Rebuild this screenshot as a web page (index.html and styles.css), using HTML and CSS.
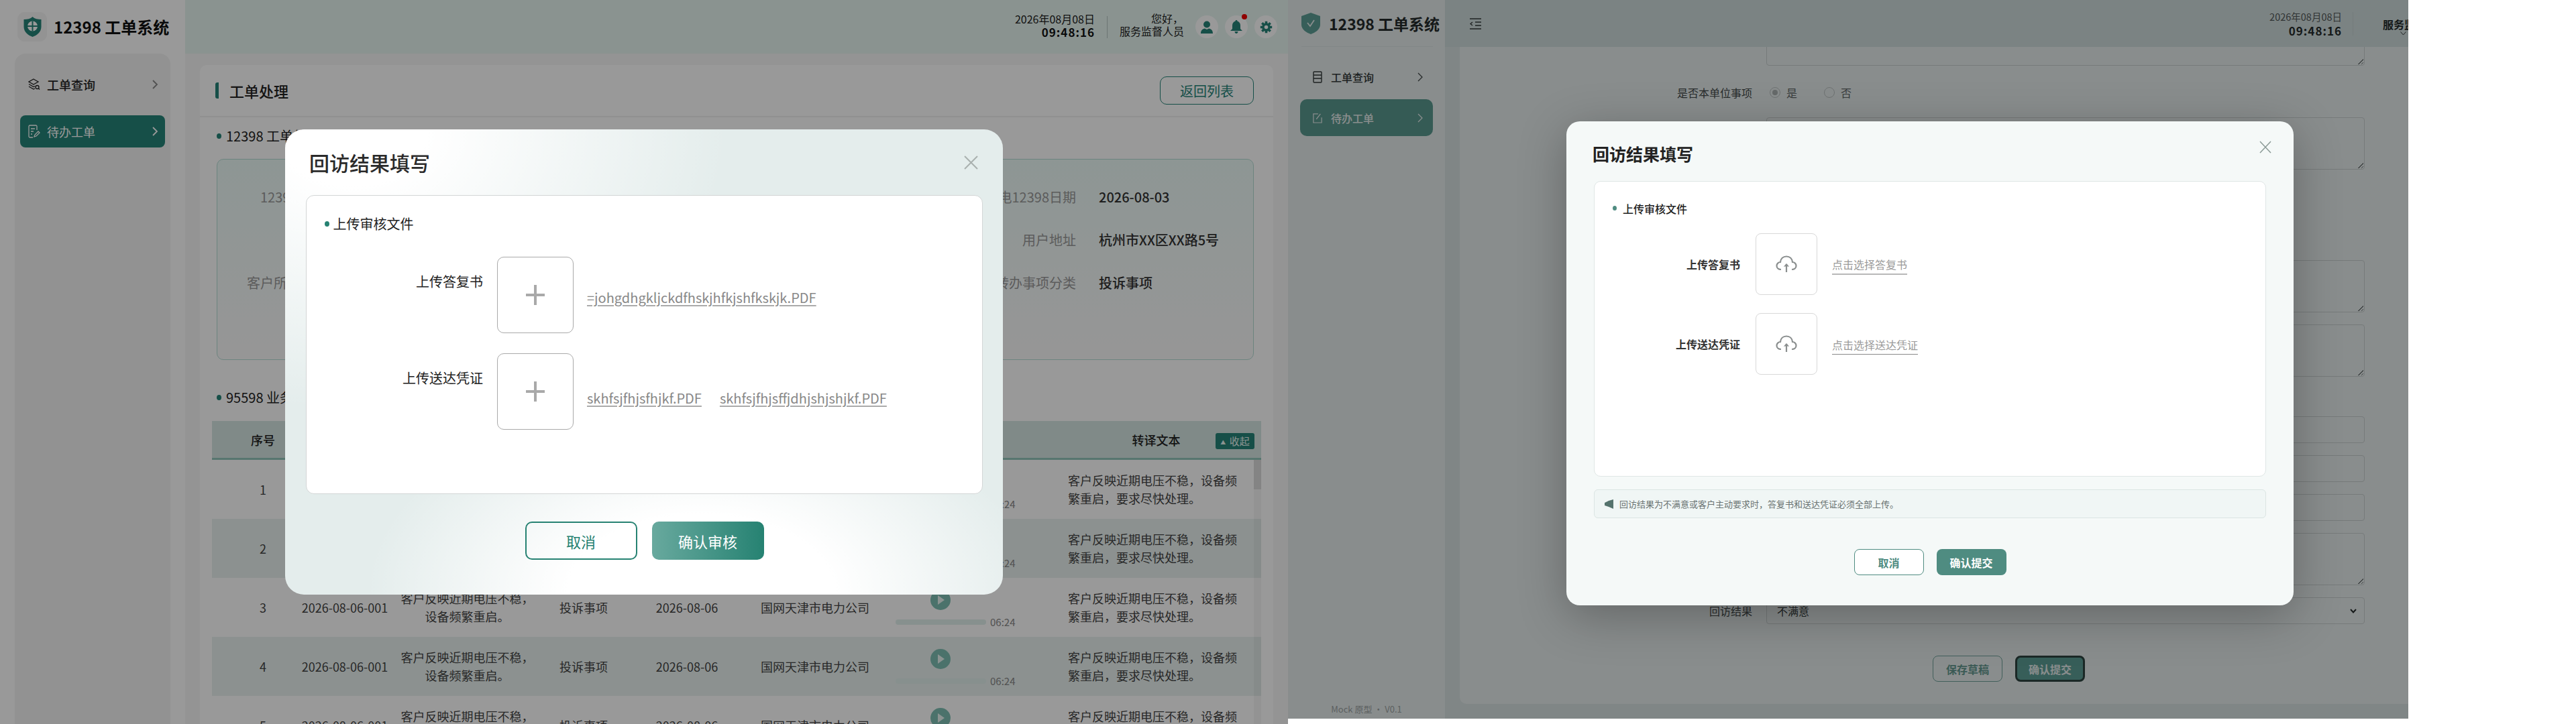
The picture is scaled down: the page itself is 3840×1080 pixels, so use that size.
FILE: index.html
```html
<!DOCTYPE html>
<html lang="zh-CN">
<head>
<meta charset="UTF-8">
<meta name="viewport" content="width=device-width, initial-scale=1.0">
<title>12398 工单系统</title>
<link rel="stylesheet" href="styles.css">
</head>
<body>

<!-- 左：审核文件上传弹窗 -->
<div class="app app-audit">
  <aside class="side">
    <div class="brand">
      <span class="brand-box">
        <svg width="27" height="30" viewBox="0 0 26 30"><path d="M13 0C16 3 21 4 26 4V15C26 23 19 28 13 30C7 28 0 23 0 15V4C5 4 10 3 13 0Z" fill="#268478"/><circle cx="13" cy="14" r="7.5" fill="#fff"/><path d="M13 6.5V21.500M5.500 14H20.500" stroke="#268478" stroke-width="2"/></svg>
      </span>
      <span class="brand-name">12398 工单系统</span>
    </div>
    <nav class="menu">
      <a class="menu-item">
        <svg class="menu-icon" width="18" height="18" viewBox="0 0 18 18" fill="none" stroke="#222" stroke-width="1.300"><path d="M8 1 15 5 8 9 1 5Z"/><path d="M1 8.500 8 12.500 10 11.500M1 12 8 16 10 15"/><circle cx="13.500" cy="13" r="2.500"/><path d="M15.500 15 17 16.500"/></svg>
        <span class="menu-text">工单查询</span>
        <svg class="menu-arrow" width="10" height="16" viewBox="0 0 10 16" fill="none" stroke="#888" stroke-width="1.800"><path d="M2 2 8 8 2 14"/></svg>
      </a>
      <a class="menu-item active">
        <svg class="menu-icon" width="18" height="20" viewBox="0 0 18 20" fill="none" stroke="#fff" stroke-width="1.300"><path d="M13 8V2.500C13 1.700 12.300 1 11.500 1H2.500C1.700 1 1 1.700 1 2.500V17.500C1 18.300 1.700 19 2.500 19H7"/><path d="M4 6H10M4 10H8M4 14H6"/><path d="M9 18 10 15 15 10 17 12 12 17Z"/></svg>
        <span class="menu-text">待办工单</span>
        <svg class="menu-arrow" width="10" height="16" viewBox="0 0 10 16" fill="none" stroke="#fff" stroke-width="1.800"><path d="M2 2 8 8 2 14"/></svg>
      </a>
    </nav>
  </aside>

  <div class="main">
    <header class="top">
      <div class="clock">
        <span class="clock-date">2026年08月08日</span>
        <strong class="clock-time">09:48:16</strong>
      </div>
      <div class="top-line"></div>
      <div class="hello">您好，<br>服务监督人员</div>
      <span class="round-btn">
        <svg width="18" height="19" viewBox="0 0 18 19" fill="#268478"><circle cx="9" cy="5.500" r="5"/><path d="M0 19C0 14 3 12 6 11.500L9 13 12 11.500C15 12 18 14 18 19Z"/></svg>
      </span>
      <span class="round-btn">
        <svg width="18" height="20" viewBox="0 0 18 20" fill="#268478"><path d="M9 0C10 0 10.500.7 10.500 1.500 13.500 2.300 15 5 15 8V13L18 16H0L3 13V8C3 5 4.500 2.300 7.500 1.500 7.500.7 8 0 9 0Z"/><path d="M6.500 17H11.500C11.500 18.500 10.500 20 9 20S6.500 18.500 6.500 17Z"/></svg>
        <i class="red-dot"></i>
      </span>
      <span class="round-btn">
        <svg width="19" height="19" viewBox="0 0 24 24"><path d="M12 1V23M1 12H23M4.200 4.200 19.800 19.800M19.800 4.200 4.200 19.800" stroke="#268478" stroke-width="4.500"/><circle cx="12" cy="12" r="8" fill="#268478"/><circle cx="12" cy="12" r="3.500" fill="#fff"/></svg>
      </span>
    </header>

    <section class="card">
      <div class="card-head">
        <h2 class="card-title">工单处理</h2>
        <button class="btn-back">返回列表</button>
      </div>

      <h3 class="sec-title">12398 工单信息</h3>
      <div class="info-box">
        <span class="info-label">12398 编号</span><span class="info-val">TD20260803001</span>
        <span class="info-label">用户姓名</span><span class="info-val">张先生</span>
        <span class="info-label">来电12398日期</span><span class="info-val">2026-08-03</span>
        <span class="info-label">户号</span><span class="info-val">3300128890</span>
        <span class="info-label">联系电话</span><span class="info-val">138****5678</span>
        <span class="info-label">用户地址</span><span class="info-val">杭州市XX区XX路5号</span>
        <span class="info-label">客户所属地区</span><span class="info-val">杭州市</span>
        <span class="info-label">承办单位</span><span class="info-val">国网杭州供电公司</span>
        <span class="info-label">转办事项分类</span><span class="info-val">投诉事项</span>
      </div>

      <h3 class="sec-title sec-second">95598 业务记录</h3>
      <div class="grid-table">
        <div class="g-row g-head">
          <span>序号</span><span>工单编号</span><span>诉求内容</span><span>业务类型</span><span>受理日期</span><span>承办单位</span><span>录音</span><span>转译文本</span>
          <button class="btn-fold"><small>▲</small> 收起</button>
        </div>
        <div class="g-row">
          <span>1</span><span>2026-08-06-001</span><span class="g-desc">客户反映近期电压不稳，设备频繁重启。</span><span>投诉事项</span><span>2026-08-06</span><span>国网天津市电力公司</span>
          <div class="audio"><i class="play"></i><div class="audio-line"><i class="audio-bar"></i><em>06:24</em></div></div>
          <span class="g-text">客户反映近期电压不稳，设备频繁重启，要求尽快处理。</span>
        </div>
        <div class="g-row">
          <span>2</span><span>2026-08-06-001</span><span class="g-desc">客户反映近期电压不稳，设备频繁重启。</span><span>投诉事项</span><span>2026-08-06</span><span>国网天津市电力公司</span>
          <div class="audio"><i class="play"></i><div class="audio-line"><i class="audio-bar"></i><em>06:24</em></div></div>
          <span class="g-text">客户反映近期电压不稳，设备频繁重启，要求尽快处理。</span>
        </div>
        <div class="g-row">
          <span>3</span><span>2026-08-06-001</span><span class="g-desc">客户反映近期电压不稳，设备频繁重启。</span><span>投诉事项</span><span>2026-08-06</span><span>国网天津市电力公司</span>
          <div class="audio"><i class="play"></i><div class="audio-line"><i class="audio-bar"></i><em>06:24</em></div></div>
          <span class="g-text">客户反映近期电压不稳，设备频繁重启，要求尽快处理。</span>
        </div>
        <div class="g-row">
          <span>4</span><span>2026-08-06-001</span><span class="g-desc">客户反映近期电压不稳，设备频繁重启。</span><span>投诉事项</span><span>2026-08-06</span><span>国网天津市电力公司</span>
          <div class="audio"><i class="play"></i><div class="audio-line"><i class="audio-bar"></i><em>06:24</em></div></div>
          <span class="g-text">客户反映近期电压不稳，设备频繁重启，要求尽快处理。</span>
        </div>
        <div class="g-row">
          <span>5</span><span>2026-08-06-001</span><span class="g-desc">客户反映近期电压不稳，设备频繁重启。</span><span>投诉事项</span><span>2026-08-06</span><span>国网天津市电力公司</span>
          <div class="audio"><i class="play"></i><div class="audio-line"><i class="audio-bar"></i><em>06:24</em></div></div>
          <span class="g-text">客户反映近期电压不稳，设备频繁重启，要求尽快处理。</span>
        </div>
        <div class="scroll-track"><i class="scroll-thumb"></i></div>
      </div>
    </section>
  </div>

  <div class="mask"></div>
  <div class="modal">
    <div class="modal-head">
      <h2 class="modal-title">回访结果填写</h2>
      <svg class="modal-close" width="21" height="21" viewBox="0 0 21 21" stroke="#a9b0ae" stroke-width="2"><path d="M1 1 20 20M20 1 1 20"/></svg>
    </div>
    <div class="modal-card">
      <h3 class="sec-title">上传审核文件</h3>
      <div class="up-row">
        <label class="up-label">上传答复书</label>
        <div class="up-box"><span class="up-plus"></span></div>
        <a class="up-file">=johgdhgkljckdfhskjhfkjshfkskjk.PDF</a>
      </div>
      <div class="up-row">
        <label class="up-label">上传送达凭证</label>
        <div class="up-box"><span class="up-plus"></span></div>
        <a class="up-file low">skhfsjfhjsfhjkf.PDF</a>
        <a class="up-file low">skhfsjfhjsffjdhjshjshjkf.PDF</a>
      </div>
    </div>
    <div class="modal-foot">
      <button class="btn-line">取消</button>
      <button class="btn-solid">确认审核</button>
    </div>
  </div>
</div>

<!-- 右：回访结果弹窗 -->
<div class="app2">
  <div class="app2-inner">
    <aside class="side2">
      <div class="brand2">
        <svg width="28" height="32" viewBox="0 0 28 32"><path d="M14 0 28 5V18C28 25 20 30 14 32 8 30 0 25 0 18V5Z" fill="#62a69b"/><path d="M9 15 13 20 19 11" fill="none" stroke="#fff" stroke-width="1.800"/></svg>
        <span class="brand2-name">12398 工单系统</span>
      </div>
      <nav class="menu2">
        <a class="menu2-item">
          <svg width="14" height="18" viewBox="0 0 14 18" fill="none" stroke="#333" stroke-width="1.400"><rect x="1" y="1" width="12" height="16" rx="1"/><path d="M1 6H13M1 11H13"/></svg>
          <span class="menu2-text">工单查询</span>
          <svg class="menu2-arrow" width="9" height="14" viewBox="0 0 9 14" fill="none" stroke="#444" stroke-width="1.300"><path d="M1 1 7 7 1 13"/></svg>
        </a>
        <a class="menu2-item active">
          <svg width="14" height="16" viewBox="0 0 16 18" fill="none" stroke="#fff" stroke-width="1.400"><path d="M9 2H1V17H15V8"/><path d="M6 11 13 2"/></svg>
          <span class="menu2-text">待办工单</span>
          <svg class="menu2-arrow" width="9" height="14" viewBox="0 0 9 14" fill="none" stroke="#fff" stroke-width="1.300"><path d="M1 1 7 7 1 13"/></svg>
        </a>
      </nav>
      <div class="side2-foot">Mock 原型 · V0.1</div>
    </aside>

    <div class="main2">
      <header class="top2">
        <svg class="fold-icon" width="17" height="17" viewBox="0 0 17 17" fill="none" stroke="#333" stroke-width="1.400"><path d="M0 1H17M8 6H17M8 11H17M0 16H17M4 6 1 8.500 4 11"/></svg>
        <div class="clock2">
          <span class="clock2-date">2026年08月08日</span>
          <strong class="clock2-time">09:48:16</strong>
        </div>
        <div class="top2-line"></div>
        <div class="user2">
          <strong>服务监督人员</strong>
          <svg width="9" height="6" viewBox="0 0 9 6" fill="none" stroke="#333"><path d="M.5.500 4.500 5 8.500.500"/></svg>
        </div>
      </header>

      <section class="form-card">
        <div class="f-row"><label>回访说明</label><div class="f-area"><i class="grip"></i></div></div>
        <div class="f-row f-radio">
          <label>是否本单位事项</label>
          <span class="radio on"></span><span class="radio-text">是</span>
          <span class="radio"></span><span class="radio-text">否</span>
        </div>
        <div class="f-row"><label>处理结果</label><div class="f-area"><i class="grip"></i></div></div>
        <div class="f-row f-gap-l"><label>整改措施</label><div class="f-area"><i class="grip"></i></div></div>
        <div class="f-row"><label>回复内容</label><div class="f-area"><i class="grip"></i></div></div>
        <div class="f-row f-gap-m"><label>回访人</label><div class="f-input"></div></div>
        <div class="f-row"><label>回访电话</label><div class="f-input"></div></div>
        <div class="f-row"><label>回访时间</label><div class="f-input"></div></div>
        <div class="f-row"><label>回访记录</label><div class="f-area"><i class="grip"></i></div></div>
        <div class="f-row">
          <label>回访结果</label>
          <div class="f-input f-select">不满意
            <svg width="10" height="7" viewBox="0 0 10 7" fill="none" stroke="#222" stroke-width="2"><path d="M1 1 5 5.500 9 1"/></svg>
          </div>
        </div>
        <div class="form-btns">
          <button class="btn2-line">保存草稿</button>
          <button class="btn2-solid dark">确认提交</button>
        </div>
      </section>
    </div>

    <div class="mask2"></div>
    <div class="modal2">
      <div class="modal2-head">
        <h2 class="modal2-title">回访结果填写</h2>
        <svg class="modal2-close" width="18" height="19" viewBox="0 0 18 19" stroke="#8a9a96" stroke-width="1.500"><path d="M1 1 17 18M17 1 1 18"/></svg>
      </div>
      <div class="modal2-card">
        <h3 class="sec2-title">上传审核文件</h3>
        <div class="up2-row">
          <label class="up2-label">上传答复书</label>
          <div class="up2-box">
            <svg width="32" height="26" viewBox="0 0 32 26" fill="none" stroke="#8b8f8f" stroke-width="2.200"><path d="M8 21C4 21 1.500 18.500 1.500 15.500 1.500 12.500 4 10 7 10 7.500 5 11 1.500 16 1.500S24.500 5 25 10C28 10 30.500 12.500 30.500 15.500 30.500 18.500 28 21 24 21"/><path d="M16 25V13"/><path d="M12.500 16.500 16 12.500 19.500 16.500" fill="#8b8f8f" stroke-width="1"/></svg>
          </div>
          <a class="up2-link">点击选择答复书</a>
        </div>
        <div class="up2-row">
          <label class="up2-label">上传送达凭证</label>
          <div class="up2-box">
            <svg width="32" height="26" viewBox="0 0 32 26" fill="none" stroke="#8b8f8f" stroke-width="2.200"><path d="M8 21C4 21 1.500 18.500 1.500 15.500 1.500 12.500 4 10 7 10 7.500 5 11 1.500 16 1.500S24.500 5 25 10C28 10 30.500 12.500 30.500 15.500 30.500 18.500 28 21 24 21"/><path d="M16 25V13"/><path d="M12.500 16.500 16 12.500 19.500 16.500" fill="#8b8f8f" stroke-width="1"/></svg>
          </div>
          <a class="up2-link thin">点击选择送达凭证</a>
        </div>
      </div>
      <div class="notice">
        <svg width="13" height="14" viewBox="0 0 13 14" fill="#55736d"><path d="M0 5 6 2 13 0V14L6 11 0 9Z"/></svg>
        <span>回访结果为不满意或客户主动要求时，答复书和送达凭证必须全部上传。</span>
      </div>
      <div class="modal2-foot">
        <button class="btn2-line light">取消</button>
        <button class="btn2-solid">确认提交</button>
      </div>
    </div>
  </div>
</div>

</body>
</html>
```

FILE: styles.css
```css
* {
  box-sizing: border-box;
}
body {
  margin: 0;
  display: flex;
  align-items: flex-start;
  width: 3840px;
  height: 1080px;
  overflow: hidden;
  background: #fff;
  color: #222;
  font-family: "Noto Sans CJK SC", "Noto Sans", sans-serif;
}
h2, h3 {
  margin: 0;
}
button {
  font-family: inherit;
  cursor: pointer;
}

/* 左侧页面 */
.app {
  position: relative;
  display: flex;
  flex: none;
  width: 1920px;
  height: 1080px;
  overflow: hidden;
  background: #f7f7f7;
}
.side {
  flex: none;
  width: 276px;
  display: flex;
  flex-direction: column;
  background: #fff;
}
.brand {
  height: 80px;
  padding: 18px 0 0 26px;
  display: flex;
  align-items: flex-start;
  gap: 10px;
}
.brand-box {
  width: 44px;
  height: 44px;
  border-radius: 11px;
  background: #f6f6f6;
  display: flex;
  align-items: center;
  justify-content: center;
}
.brand-name {
  font-size: 24px;
  font-weight: 700;
  line-height: 44px;
  color: #111;
}
.menu {
  flex: 1;
  margin: 0 22px;
  padding: 22px 8px;
  background: #f3f3f3;
  border-radius: 16px 16px 0 0;
}
.menu-item {
  height: 48px;
  padding: 0 10px 0 12px;
  display: flex;
  align-items: center;
  border-radius: 8px;
  margin-bottom: 22px;
}
.menu-item.active {
  background: #268478;
  color: #fff;
}
.menu-icon {
  flex: none;
}
.menu-text {
  margin-left: 10px;
  flex: 1;
  font-size: 18px;
  font-weight: 500;
}
.menu-item.active .menu-text {
  font-weight: 400;
}

.main {
  flex: 1;
  min-width: 0;
}
.top {
  height: 80px;
  padding: 0 16px 0 0;
  display: flex;
  align-items: center;
  justify-content: flex-end;
  background: #e6f5f1;
}
.clock {
  display: flex;
  flex-direction: column;
  align-items: flex-end;
  margin-top: -4px;
  line-height: 20px;
}
.clock-date {
  font-size: 16px;
  color: #222;
}
.clock-time {
  font-size: 17px;
  letter-spacing: 1px;
  font-weight: 700;
  color: #111;
}
.top-line {
  width: 1px;
  height: 33px;
  margin: 0 18px;
  background: #b5c4c1;
}
.hello {
  width: 95px;
  margin-top: -6px;
  margin-right: 18px;
  text-align: right;
  font-size: 16px;
  line-height: 19px;
  white-space: nowrap;
}
.round-btn {
  position: relative;
  width: 34px;
  height: 34px;
  margin-left: 10px;
  border-radius: 50%;
  background: #fff;
  display: flex;
  align-items: center;
  justify-content: center;
}
.hello + .round-btn {
  margin-left: 0;
}
.red-dot {
  position: absolute;
  top: -2px;
  right: 1px;
  width: 8px;
  height: 8px;
  border-radius: 50%;
  background: #f00000;
}

.card {
  height: 983px;
  margin: 17px 22px 0;
  border-radius: 10px 10px 0 0;
  background: #fff;
  overflow: hidden;
}
.card-head {
  height: 78px;
  padding: 0 29px 0 23px;
  display: flex;
  align-items: center;
  justify-content: space-between;
  border-bottom: 2px solid #f0f0f0;
}
.card-title {
  padding-left: 16px;
  border-left: 5px solid #268478;
  border-radius: 3px 0 0 3px;
  font-size: 22px;
  font-weight: 500;
  line-height: 24px;
}
.btn-back {
  width: 140px;
  height: 42px;
  background: #fff;
  border: 1px solid #268478;
  border-radius: 10px;
  color: #268478;
  font-size: 20px;
}
.sec-title {
  position: relative;
  font-size: 20px;
  font-weight: 400;
  line-height: 28px;
  padding-left: 14px;
}
.sec-title::before {
  content: "";
  position: absolute;
  left: 0;
  top: 10px;
  width: 7px;
  height: 8px;
  border-radius: 50%;
  background: #268478;
}
.card > .sec-title {
  margin: 14px 0 0 25px;
  color: #222;
}
.card > .sec-second {
  margin-top: 42px;
}
.info-box {
  height: 300px;
  margin: 20px 29px 0 25px;
  padding: 39px 0 0;
  display: grid;
  grid-template-columns: 164px 1fr 164px 1fr 164px 230px;
  grid-auto-rows: 32px;
  gap: 32px 34px;
  align-items: center;
  border: 1px solid #b5dcd4;
  border-radius: 10px;
  background: linear-gradient(180deg, #ecfaf7, #fbfbfb);
  font-size: 20px;
}
.info-label {
  text-align: right;
  color: #999;
}
.info-val {
  color: #333;
  font-weight: 500;
}

/* 表格 */
.grid-table {
  position: relative;
  margin: 21px 18px 0;
}
.g-row {
  display: grid;
  grid-template-columns: 124px 148px 217px 130px 178px 204px 257px 1fr;
  height: 88px;
  align-items: center;
  justify-items: center;
  font-size: 18px;
  color: #444;
  text-align: center;
}
.g-row > span:first-child {
  padding-left: 28px;
  width: 100%;
}
.g-row:nth-child(odd) {
  background: #e9f2f0;
}
.g-head.g-head {
  height: 58px;
  position: relative;
  background: #d5e6e3;
  border-bottom: 3px solid #91c5b9;
  color: #222;
  font-weight: 500;
}
.g-head > span:last-of-type {
  padding-right: 7px;
}
.btn-fold {
  position: absolute;
  right: 10px;
  top: 18px;
  width: 58px;
  height: 24px;
  padding: 0;
  border: none;
  border-radius: 3px;
  background: #268478;
  color: #e8f5f2;
  font-size: 15px;
  line-height: 24px;
}
.btn-fold small {
  font-size: 8px;
  vertical-align: 1px;
  margin-right: 2px;
}
.g-desc {
  width: 198px;
  line-height: 27px;
}
.g-text {
  width: 100%;
  padding: 0 26px 0 18px;
  line-height: 27px;
  text-align: left;
}
.audio {
  width: 100%;
  padding: 5px 0 0 18px;
  display: flex;
  flex-direction: column;
  align-items: flex-start;
}
.play {
  position: relative;
  width: 30px;
  height: 30px;
  margin-left: 52px;
  border-radius: 50%;
  background: #7dbeb2;
}
.play::after {
  content: "";
  position: absolute;
  left: 11px;
  top: 8px;
  border-left: 10px solid #e8f5f2;
  border-top: 7px solid transparent;
  border-bottom: 7px solid transparent;
}
.audio-line {
  margin-top: 8px;
  display: flex;
  align-items: center;
  gap: 6px;
}
.audio-bar {
  width: 135px;
  height: 8px;
  border-radius: 4px;
  background: #e2f0ed;
}
.audio-line em {
  font-style: normal;
  font-size: 15px;
  line-height: 20px;
  color: #888;
}
.scroll-track {
  position: absolute;
  right: 0;
  top: 58px;
  bottom: 0;
  width: 11px;
  background: rgba(0, 0, 0, .04);
}
.scroll-thumb {
  display: block;
  height: 44px;
  background: rgba(0, 0, 0, .1);
}

.mask {
  position: absolute;
  inset: 0;
  background: rgba(0, 0, 0, .4);
}

/* 左弹窗 */
.modal {
  position: absolute;
  left: 425px;
  top: 193px;
  width: 1070px;
  height: 694px;
  padding: 0 30px 0 31px;
  border-radius: 28px;
  background:
    radial-gradient(560px 420px at 100px 0, #fff 20%, rgba(255, 255, 255, 0) 100%),
    radial-gradient(500px 300px at 620px 694px, #fff 40%, rgba(255, 255, 255, 0) 100%),
    #e4edec;
}
.modal-head {
  height: 98px;
  display: flex;
  align-items: center;
  justify-content: space-between;
  padding: 0 7px 0 5px;
}
.modal-title {
  font-size: 30px;
  font-weight: 500;
  color: #2a2a2a;
}
.modal-card {
  height: 446px;
  padding: 28px 0 0 26.500px;
  background: #fff;
  border: 1.5px solid #d3d6d6;
  border-radius: 12px;
}
.up-row {
  display: flex;
  align-items: center;
  margin-bottom: 30px;
}
.modal-card .sec-title {
  color: #222;
  margin-bottom: 35px;
  padding-left: 13px;
}
.modal-card .sec-title::before {
  background: #268272;
}
.up-label {
  align-self: flex-start;
  flex: none;
  width: 236.500px;
  margin-top: 22px;
  text-align: right;
  font-size: 20px;
  line-height: 30px;
  color: #222;
}
.up-box {
  flex: none;
  width: 114px;
  height: 114px;
  margin: 0 20px 0 21px;
  border: 1.5px solid #a9a9a9;
  border-radius: 10px;
  display: flex;
  align-items: center;
  justify-content: center;
}
.up-plus {
  position: relative;
  width: 28px;
  height: 30px;
}
.up-plus::before, .up-plus::after {
  content: "";
  position: absolute;
  background: #a9a9a9;
}
.up-plus::before {
  left: 12px;
  top: 0;
  width: 4px;
  height: 30px;
}
.up-plus::after {
  left: 0;
  top: 13px;
  width: 28px;
  height: 4px;
}
.up-file {
  margin-right: 27px;
  margin-top: 8px;
  font-size: 20px;
  line-height: 28px;
  color: #888;
  text-decoration: underline 2px #aaa;
  text-underline-offset: 3px;
}
.up-file.low {
  margin-top: 20px;
}
.modal-foot {
  margin-top: 41px;
  display: flex;
  justify-content: center;
  gap: 22px;
}
.btn-line, .btn-solid {
  width: 167px;
  height: 57px;
  border-radius: 10px;
  font-size: 22px;
}
.btn-line {
  background: transparent;
  border: 2px solid #268272;
  color: #268272;
}
.btn-solid {
  border: none;
  color: #fff;
  background: linear-gradient(90deg, #68a99e, #268272);
}

/* 右侧页面，视口比内容窄 */
.app2 {
  position: relative;
  flex: none;
  width: 1670px;
  height: 1072px;
  overflow: hidden;
}
.app2-inner {
  position: relative;
  display: flex;
  width: 1920px;
  height: 1072px;
  background: #eef2f2;
}
.side2 {
  flex: none;
  width: 234px;
  display: flex;
  flex-direction: column;
  background: #fff;
}
.brand2 {
  height: 70px;
  margin: 0 18px 0 20px;
  display: flex;
  align-items: center;
  gap: 13px;
  border-bottom: 1px solid #f2f4f4;
}
.brand2 svg {
  flex: none;
}
.brand2-name {
  font-size: 23px;
  font-weight: 700;
  white-space: nowrap;
  color: #222;
}
.menu2 {
  flex: 1;
  padding: 17px 18px;
}
.menu2-item {
  height: 55px;
  padding: 0 14px 0 19px;
  margin-bottom: 6px;
  display: flex;
  align-items: center;
  border-radius: 10px;
  color: #333;
}
.menu2-item.active {
  background: #5f9f94;
  color: #fff;
}
.menu2-text {
  flex: 1;
  margin-left: 13px;
  font-size: 16px;
  font-weight: 500;
}
.side2-foot {
  height: 28px;
  text-align: center;
  font-size: 13px;
  line-height: 28px;
  color: #aaa;
}
.main2 {
  flex: 1;
  min-width: 0;
  overflow: hidden;
}
.top2 {
  position: relative;
  z-index: 1;
  height: 70px;
  padding: 0 192px 0 37px;
  display: flex;
  align-items: center;
  background: #e5ebeb;
}
.fold-icon {
  margin-right: auto;
}
.clock2 {
  display: flex;
  flex-direction: column;
  align-items: flex-end;
}
.clock2-date {
  font-size: 14.500px;
  line-height: 22px;
  color: #555;
}
.clock2-time {
  font-size: 17px;
  line-height: 20px;
  letter-spacing: 1px;
  color: #222;
}
.top2-line {
  width: 1px;
  height: 35px;
  margin: 0 44px 0 16px;
  background: #d6dddc;
}
.user2 {
  width: 96px;
  font-size: 16px;
  line-height: 22px;
  padding-top: 8px;
}
.user2 strong {
  display: block;
  white-space: nowrap;
}
.user2 svg {
  display: block;
  margin-left: 26px;
}

.form-card {
  height: 1040px;
  margin: -60px 22px 0;
  padding: 70px 0 0 0;
  border-radius: 10px;
  background: #fff;
}
.f-row {
  display: flex;
  margin-bottom: 18px;
}
.f-row > label {
  flex: none;
  width: 436px;
  text-align: right;
  font-size: 16px;
  color: #444;
  line-height: 40px;
}
.f-area {
  position: relative;
  width: 892px;
  height: 78px;
  margin-left: 21px;
  border: 1px solid #dadada;
  border-radius: 4px;
}
.form-card .f-row:first-child {
  margin-top: -60px;
}
.grip {
  position: absolute;
  right: 1px;
  bottom: 1px;
  width: 9px;
  height: 9px;
  background: linear-gradient(135deg, transparent 55%, #777 55%, #777 62%, transparent 62%, transparent 78%, #777 78%, #777 85%, transparent 85%);
}
.f-radio {
  height: 32px;
  margin-top: 24px;
  margin-bottom: 21px;
  align-items: center;
}
.radio {
  position: relative;
  width: 16px;
  height: 16px;
  margin-left: 26px;
  border: 1px solid #ccc;
  border-radius: 50%;
  background: #fff;
}
.radio.on::after {
  content: "";
  position: absolute;
  inset: 3px;
  border-radius: 50%;
  background: #bbb;
}
.radio-text {
  margin-left: 9px;
  width: 16px;
  font-size: 16px;
  color: #666;
}
.radio-text + .radio {
  margin-left: 40px;
}
.f-gap-l {
  margin-top: 135px;
}
.f-gap-m {
  margin-top: 59px;
}
.f-input {
  width: 892px;
  height: 40px;
  margin-left: 21px;
  border: 1px solid #dadada;
  border-radius: 4px;
}
.f-select {
  padding: 0 11px 0 15px;
  display: flex;
  align-items: center;
  justify-content: space-between;
  font-size: 16px;
  color: #333;
}
.form-btns {
  margin: 47px 0 0 705px;
  display: flex;
  gap: 19px;
}
.btn2-line, .btn2-solid {
  width: 104px;
  height: 39px;
  padding: 0;
  border-radius: 8px;
  font-size: 16px;
  font-weight: 600;
}
.btn2-line {
  background: transparent;
  border: 1.5px solid #78a89f;
  color: #6a9e94;
}
.btn2-line.light {
  background: #fff;
  color: #4f8c81;
  border-color: #4f8c81;
}
.btn2-solid {
  border: none;
  color: #fff;
  background: #4f8c81;
}
.btn2-solid.dark {
  background: #62a69b;
  border: 3px solid #2c3f3b;
}
.mask2 {
  position: absolute;
  z-index: 2;
  inset: 0;
  background: rgba(8, 16, 16, .48);
}

/* 右弹窗 */
.modal2 {
  position: absolute;
  z-index: 3;
  left: 415px;
  top: 181px;
  width: 1084px;
  height: 722px;
  padding: 0 41px;
  border-radius: 20px;
  background: #f5f9f8;
  box-shadow: 0 16px 70px rgba(0, 0, 0, .28);
}
.modal2-head {
  height: 89px;
  padding-top: 7px;
  display: flex;
  align-items: center;
  justify-content: space-between;
}
.modal2-close {
  margin-right: -8px;
  margin-top: -20px;
}
.modal2-title {
  margin-left: -2px;
  font-size: 25px;
  font-weight: 700;
  color: #222;
}
.modal2-card {
  height: 441px;
  padding: 26px 0 0 27px;
  background: #fff;
  border: 1px solid #dfe6e5;
  border-radius: 10px;
}
.sec2-title {
  position: relative;
  padding-left: 15px;
  font-size: 16px;
  font-weight: 500;
  line-height: 28px;
  margin-bottom: 23px;
}
.sec2-title::before {
  content: "";
  position: absolute;
  left: 0;
  top: 10px;
  width: 6px;
  height: 7px;
  border-radius: 50%;
  background: #4f8c81;
}
.up2-row {
  display: flex;
  align-items: center;
  margin-bottom: 27px;
}
.up2-label {
  flex: none;
  width: 190px;
  text-align: right;
  font-size: 16px;
  font-weight: 600;
  color: #333;
}
.up2-box {
  flex: none;
  width: 92px;
  height: 92px;
  margin: 0 22px 0 23px;
  border: 1.5px solid #d8d8d8;
  border-radius: 8px;
  display: flex;
  align-items: center;
  justify-content: center;
}
.up2-link {
  padding: 4px 0 2px;
  font-size: 16px;
  line-height: 24px;
  color: #999;
  border-bottom: 2px solid #b8b8b8;
}
.up2-link.thin {
  border-bottom: 1px solid #888;
}
.notice {
  height: 43px;
  margin-top: 19px;
  padding-left: 15px;
  display: flex;
  align-items: center;
  gap: 9px;
  background: #f0f6f5;
  border: 1px solid #dbe5e3;
  border-radius: 6px;
  font-size: 13px;
  color: #6a7372;
}
.modal2-foot {
  margin-top: 46px;
  display: flex;
  justify-content: center;
  gap: 19px;
}
```
